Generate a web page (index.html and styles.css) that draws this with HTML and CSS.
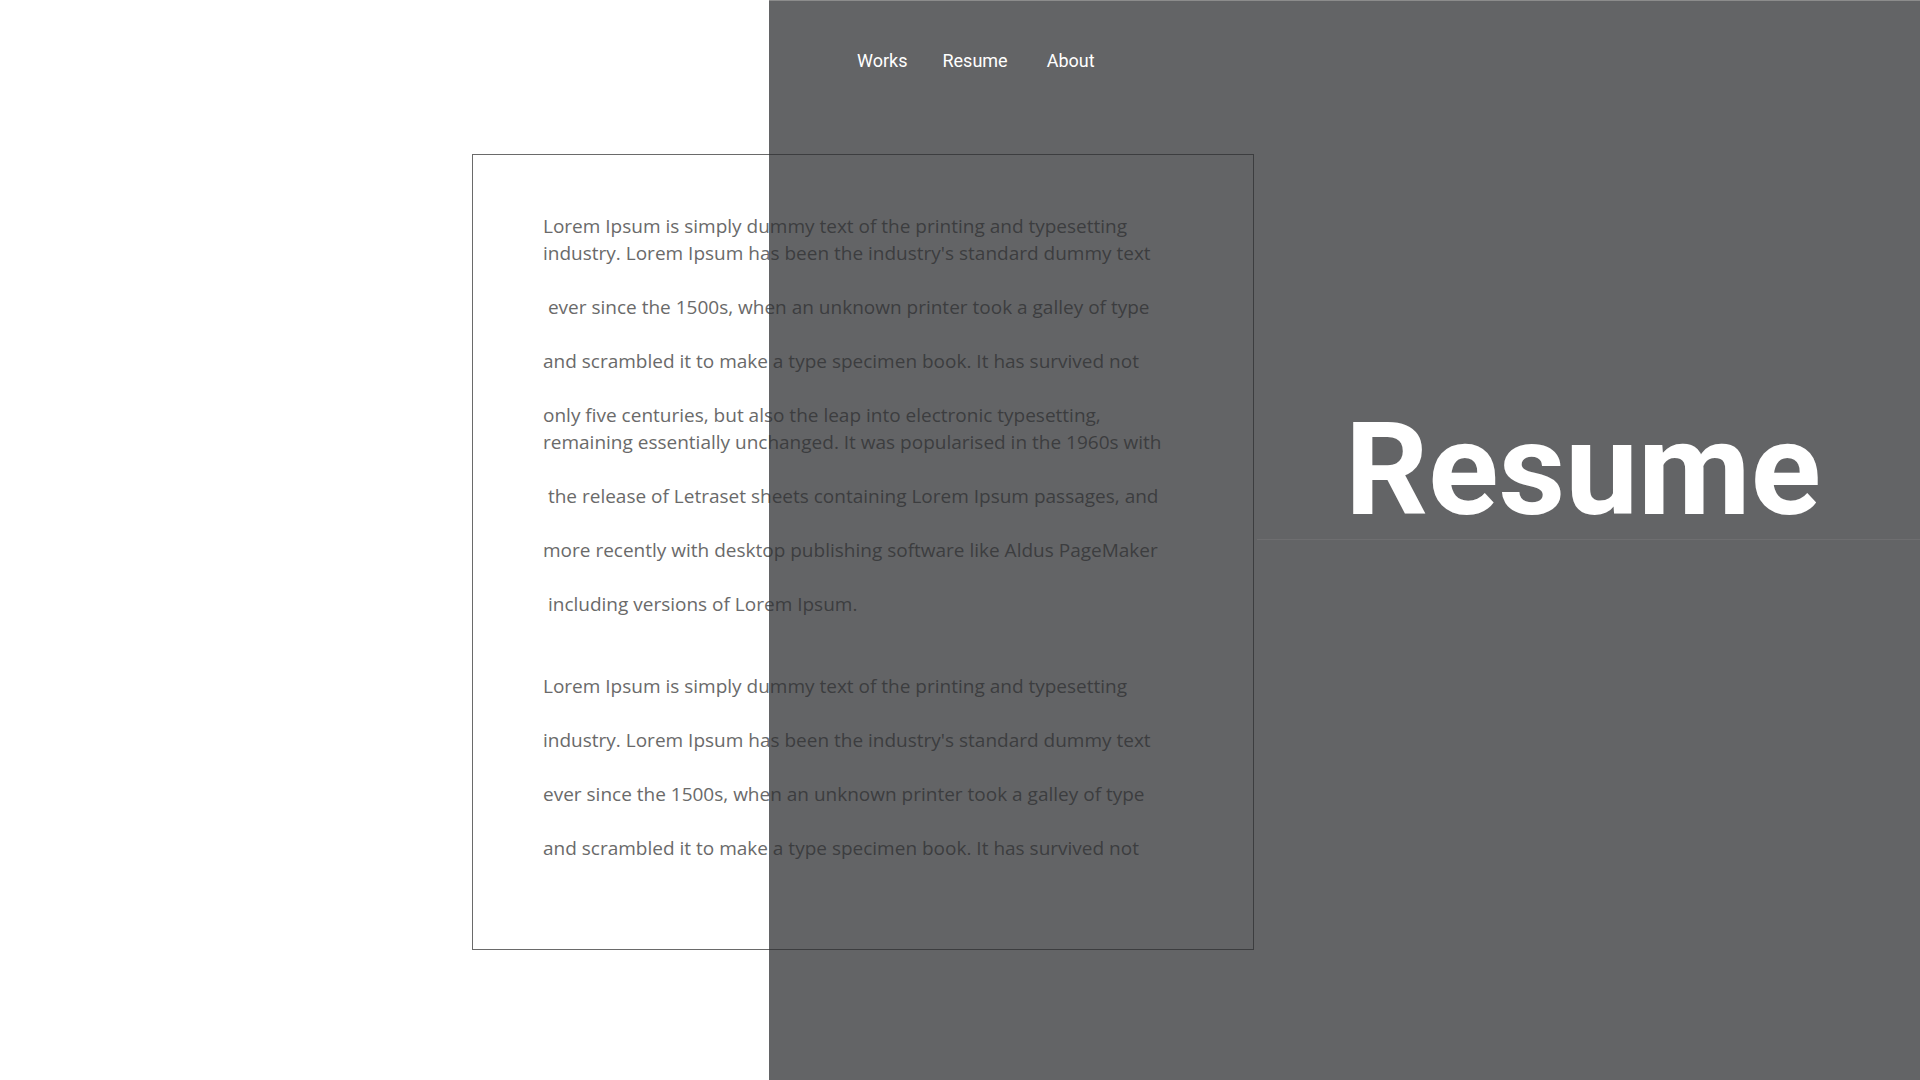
FILE: index.html
```html
<!DOCTYPE html>
<html lang="en">
<head>
<meta charset="utf-8">
<title>Resume</title>
<link rel="stylesheet" href="styles.css">
</head>
<body>
<main class="sheet">
  <p class="para">Lorem Ipsum is simply dummy text of the printing and typesetting<br>industry. Lorem Ipsum has been the industry's standard dummy text<br><br>&nbsp;ever since the 1500s, when an unknown printer took a galley of type<br><br>and scrambled it to make a type specimen book. It has survived not<br><br>only five centuries, but also the leap into electronic typesetting,<br>remaining essentially unchanged. It was popularised in the 1960s with<br><br>&nbsp;the release of Letraset sheets containing Lorem Ipsum passages, and<br><br>more recently with desktop publishing software like Aldus PageMaker<br><br>&nbsp;including versions of Lorem Ipsum.</p>
  <p class="para para-second">Lorem Ipsum is simply dummy text of the printing and typesetting<br><br>industry. Lorem Ipsum has been the industry's standard dummy text<br><br>ever since the 1500s, when an unknown printer took a galley of type<br><br>and scrambled it to make a type specimen book. It has survived not</p>
</main>
<aside class="panel">
  <nav class="nav">
    <a class="nav-link nav-works" href="#">Works</a>
    <a class="nav-link nav-resume" href="#">Resume</a>
    <a class="nav-link" href="#">About</a>
  </nav>
  <div class="title-wrap">
    <h1 class="title">Resume</h1>
  </div>
</aside>
</body>
</html>
```
FILE: styles.css
```css
html, body {
  margin: 0;
  padding: 0;
}
body {
  width: 1920px;
  height: 1080px;
  overflow: hidden;
  background: #ffffff;
  position: relative;
  font-family: "Open Sans", "Noto Sans", sans-serif;
}
.sheet {
  box-sizing: border-box;
  margin: 154px 0 0 472px;
  width: 782px;
  height: 796px;
  border: 1px solid #6a6a6a;
  padding: 58px 0 0 70px;
}
.para {
  margin: 0;
  font-size: 19px;
  line-height: 27px;
  color: #6a6a6a;
  white-space: nowrap;
}
.para-second {
  margin-top: 55px;
}
.panel {
  position: absolute;
  left: 769px;
  top: 0;
  width: 1151px;
  height: 1080px;
  box-sizing: border-box;
  background: rgba(45, 46, 49, 0.74);
  border-top: 1px solid #8c8c8c;
  display: flex;
  flex-direction: column;
}
.nav {
  display: flex;
  margin: 49px 0 0 88px;
  font-family: Roboto, "Liberation Sans", sans-serif;
  font-size: 18px;
  line-height: 21px;
}
.nav-link {
  color: #ffffff;
  text-decoration: none;
}
.nav-works {
  margin-right: 35px;
}
.nav-resume {
  margin-right: 39px;
}
.title-wrap {
  margin: 334px 0 0 488px;
  border-bottom: 1px solid rgba(255, 255, 255, 0.07);
}
.title {
  margin: 0;
  padding: 0 0 4px 88px;
  font-family: Roboto, "Liberation Sans", sans-serif;
  font-weight: 700;
  font-size: 130px;
  line-height: 130px;
  color: #ffffff;
}
```
